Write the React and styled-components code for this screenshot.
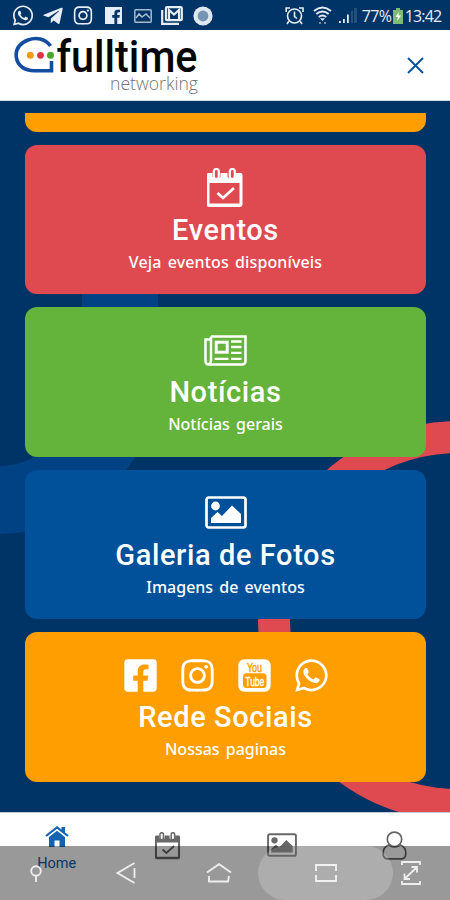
import React from 'react';
import styled, { createGlobalStyle } from 'styled-components';
import { FaWhatsapp, FaInstagram, FaFacebookSquare, FaTelegramPlane } from 'react-icons/fa';

const Global = createGlobalStyle`
  * { box-sizing: border-box; }
  body { margin: 0; background: #003366; }
`;

const Phone = styled.div`
  position: relative;
  display: flex;
  flex-direction: column;
  width: 450px;
  height: 900px;
  overflow: hidden;
  background: #003366;
  font-family: Roboto, 'Liberation Sans', sans-serif;
`;

const StatusBar = styled.div`
  display: flex;
  align-items: center;
  justify-content: space-between;
  flex: none;
  height: 30px;
  padding: 1px 9px 0 12px;
  background: #003366;
  color: #e6edf4;
`;

const StatusGroup = styled.div`
  display: flex;
  align-items: center;
`;

const Slot = styled.span`
  display: flex;
  justify-content: center;
  width: ${(p) => p.$w}px;
  margin-left: ${(p) => p.$ml || 0}px;
`;

const StatusText = styled.span`
  font-family: 'Open Sans', sans-serif;
  font-size: 16px;
  font-weight: 500;
  letter-spacing: ${(p) => p.$ls || 0}px;
`;

const Header = styled.header`
  display: flex;
  flex: none;
  align-items: flex-start;
  justify-content: space-between;
  height: 71px;
  padding: 0 26px 0 14px;
  background: #fff;
  border-bottom: 1px solid #d4dde6;
`;

const CloseButton = styled.button`
  display: flex;
  margin: 27px 0 0;
  padding: 0;
  border: 0;
  background: none;
`;

const Content = styled.main`
  position: relative;
  flex: none;
  height: 711px;
  padding: 12px 24px 0 25px;
  overflow: hidden;
`;

const Backdrop = styled.svg`
  position: absolute;
  left: 0;
  top: 0;
`;

const CardList = styled.div`
  position: relative;
  display: flex;
  flex-direction: column;
  gap: 12.6px;
`;

const CardEdge = styled.div`
  height: 19px;
  background: #ff9e00;
  border-radius: 0 0 12px 12px;
`;

const Card = styled.section`
  display: flex;
  flex-direction: column;
  align-items: center;
  height: 149.9px;
  padding-top: 22px;
  border-radius: 12px;
  background: ${(p) => p.$bg};
  color: #fff;
`;

const CardIcons = styled.div`
  display: flex;
  align-items: center;
  justify-content: center;
  gap: 20px;
  height: 42px;
`;

const CardTitle = styled.h2`
  margin: 4px 0 0;
  font-size: 29px;
  line-height: 34px;
  font-weight: 500;
  letter-spacing: 0.6px;
  white-space: nowrap;
`;

const CardText = styled.p`
  margin: 4px 0 0;
  font-family: 'Noto Sans', sans-serif;
  font-size: 16px;
  font-weight: 500;
  line-height: 22px;
  letter-spacing: ${(p) => p.$ls || 0}px;
  word-spacing: 2px;
  white-space: nowrap;
`;

const TabBar = styled.nav`
  display: grid;
  grid-template-columns: repeat(4, 112.5px);
  flex: none;
  height: 88px;
  background: #fff;
  border-top: 1px solid #c5ccd8;
`;

const Tab = styled.div`
  display: flex;
  flex-direction: column;
  align-items: center;
  padding-top: ${(p) => p.$top}px;
  padding-left: ${(p) => p.$shift || 0}px;
  color: ${(p) => p.$color || '#686868'};
  font-size: 15px;
  line-height: 18px;
`;

const TabLabel = styled.span`
  margin-top: 8px;
  font-size: 14.5px;
`;

const SystemNav = styled.div`
  position: absolute;
  left: 0;
  right: 0;
  bottom: 0;
  display: flex;
  align-items: center;
  height: 54px;
  background: rgba(0, 0, 0, 0.4);
  overflow: hidden;
`;

const NavKey = styled.span`
  display: flex;
  align-items: center;
  justify-content: center;
  flex: none;
  width: ${(p) => p.$w}px;
  height: 54px;
  border-radius: ${(p) => (p.$pressed ? '34px' : 0)};
  background: ${(p) => (p.$pressed ? 'rgba(255,255,255,0.2)' : 'none')};
`;

const CalendarIcon = ({ w = 38, h = 40 }) => (
  <svg width={w} height={h} viewBox="1.5 0 38 40" fill="none">
    <path d="M3 5H7V9Q11 14 15 9V5H22V9Q26 14 30 9V5H35Q37 5 37 7V36Q37 39 34 39H4Q1 39 1 36V7Q1 5 3 5Z M4 15V35.5H34V15Z" fill="currentColor" fillRule="evenodd" />
    <rect x="8.3" y="1" width="5" height="10" rx="2.5" stroke="currentColor" strokeWidth="2.2" />
    <rect x="24.3" y="1" width="5" height="10" rx="2.5" stroke="currentColor" strokeWidth="2.2" />
    <path d="M12 25L17.5 30L28.5 20" stroke="currentColor" strokeWidth="2.7" />
  </svg>
);

const NewsIcon = () => (
  <svg width="43" height="31" viewBox="0 0 43 31" fill="none" stroke="currentColor">
    <path d="M7 1.5H41.5V26Q41.5 29.5 38 29.5H5Q1.5 29.5 1.5 26V4.5H6M7 1.5V25Q7 29 4.5 29" strokeWidth="2.5" />
    <rect x="12.2" y="7.2" width="11" height="10" strokeWidth="3" />
    <path d="M27 6.5H37.5M27 12H37.5M27 17.8H37.5M10.5 23.8H24.5M27 23.8H37.5" strokeWidth="2.3" />
  </svg>
);

const ImageIcon = ({ w = 42, h = 33 }) => (
  <svg width={w} height={h} viewBox="0 0 42 33" fill="none">
    <rect x="1.5" y="1.5" width="39" height="30" rx="2.2" stroke="currentColor" strokeWidth="2.7" />
    <circle cx="10.5" cy="10" r="4.4" fill="currentColor" />
    <path d="M6 27V22L12.5 16L17 20L27 9.5L36 18V27Z" fill="currentColor" />
  </svg>
);

const YoutubeIcon = () => (
  <svg width="37" height="33" viewBox="-2 0 37 33" fontFamily="'Liberation Sans', sans-serif" textAnchor="middle">
    <rect x="0.3" y="0.3" width="32.4" height="32.4" rx="6" fill="#fff" />
    <text x="16.5" y="12.8" fontSize="13.5" fill="#ff9e00" stroke="#ff9e00" strokeWidth="0.5" textLength="15" lengthAdjust="spacingAndGlyphs">You</text>
    <rect x="5" y="14.3" width="23.5" height="14.8" rx="3.5" fill="#ff9e00" />
    <text x="16.8" y="26.8" fontSize="13" fill="#fff" stroke="#fff" strokeWidth="0.4" textLength="19" lengthAdjust="spacingAndGlyphs">Tube</text>
  </svg>
);

const Logo = () => (
  <svg width="190" height="70" viewBox="14 30 190 70" fill="none">
    <path d="M50.5 46C45 38.5 36 37 28 40C19 43.5 15.5 50 16.3 57C17.5 66 25 70.7 34 70.7H51.5V61" stroke="#124da0" strokeWidth="3.6" />
    <circle cx="30.3" cy="55.3" r="3.5" fill="#f59b14" />
    <circle cx="40.5" cy="55.3" r="3.4" fill="#df3345" />
    <circle cx="50.5" cy="55.3" r="3.5" fill="#4da62f" />
    <text x="56.5" y="72.3" fontFamily="Roboto, sans-serif" fontSize="45" fontWeight="500" fill="#050505" textLength="141" lengthAdjust="spacingAndGlyphs">fulltime</text>
    <text x="110" y="90" fontFamily="'Open Sans', sans-serif" fontSize="18" fontWeight="300" fill="#737373" textLength="88" lengthAdjust="spacingAndGlyphs">networking</text>
  </svg>
);

const AlarmIcon = () => (
  <svg width="19" height="20" viewBox="0 0 19 20" fill="none" stroke="currentColor" strokeWidth="1.6">
    <circle cx="9.5" cy="10" r="7" />
    <path d="M9.5 5.5V10.5L12 12.5M1.2 6V2H5M18 6V2H14M3.8 15.3L2 18M15.2 15.3L17 18" />
  </svg>
);

const WifiIcon = () => (
  <svg width="19" height="19" viewBox="0 0 19 19" fill="none" stroke="currentColor" strokeWidth="1.9">
    <path d="M1 5Q9.5-1.8 18 5M3.3 8Q9.5 3 15.7 8M5.8 11Q9.5 8 13.2 11" />
    <path d="M7 12.3H12L9.5 15Z" fill="currentColor" stroke="none" />
    <path d="M6 17H8M11 17H13" stroke="#7891aa" />
  </svg>
);

const SignalIcon = () => (
  <svg width="18" height="15" viewBox="0 0 18 15">
    <path d="M0 13H1.8V15H0ZM4 11H5.8V15H4ZM8 6.5H9.8V15H8Z" fill="#e6edf4" />
    <path d="M12 3H14V15H12ZM15 0H18V15H15Z" fill="#24507a" />
  </svg>
);

const App = () => (
  <>
    <Global />
    <Phone>
      <StatusBar>
        <StatusGroup>
          <Slot $w={22}><FaWhatsapp size={23} /></Slot>
          <Slot $w={22} $ml={8}><FaTelegramPlane size={22} /></Slot>
          <Slot $w={20} $ml={9}><FaInstagram size={21} /></Slot>
          <Slot $w={18} $ml={11}>
            <svg width="17" height="17" viewBox="0 0 17 17"><path d="M0 0H17V17H12.2V10.8H14.4L14.8 8H12.2V6.4Q12.2 5.2 13.5 5.2H15V2.7H12.8Q9.4 2.7 9.4 6V8H7.2V10.8H9.4V17H0Z" fill="currentColor" /></svg>
          </Slot>
          <Slot $w={18} $ml={12}>
            <svg width="18" height="14" viewBox="0 0 18 14" fill="none" stroke="#a9bccd" strokeWidth="1.5"><rect x="0.8" y="0.8" width="16.4" height="12.4" rx="1" /><path d="M2 9L5 5L8 8L12 5L16 9" /></svg>
          </Slot>
          <Slot $w={22} $ml={9}>
            <svg width="22" height="19" viewBox="0 0 22 19" fill="none" stroke="currentColor" strokeWidth="2.2"><rect x="5" y="1.2" width="15.8" height="13" rx="1" /><path d="M1.2 4V17.8H18M8 13V4L13 8.5L18 4V13" /></svg>
          </Slot>
          <Slot $w={20} $ml={10}>
            <svg width="20" height="20" viewBox="0 0 20 20"><circle cx="10" cy="10" r="9.6" fill="#dfe8f0" /><circle cx="10" cy="10" r="5.4" fill="#7595b4" /></svg>
          </Slot>
        </StatusGroup>
        <StatusGroup>
          <AlarmIcon />
          <Slot $w={19} $ml={9}><WifiIcon /></Slot>
          <Slot $w={18} $ml={7}><SignalIcon /></Slot>
          <Slot $w={31} $ml={4}><StatusText $ls={-0.6}>77%</StatusText></Slot>
          <Slot $w={10} $ml={1}>
            <svg width="10" height="16" viewBox="0 0 10 16"><path d="M3 0H7V2H10V16H0V2H3Z" fill="#80b879" /><path d="M6 4L2.5 9H5L4 13L8 7.5H5.3Z" fill="#fff" /></svg>
          </Slot>
          <Slot $w={36} $ml={2}><StatusText $ls={-0.9}>13:42</StatusText></Slot>
        </StatusGroup>
      </StatusBar>

      <Header>
        <Logo />
        <CloseButton aria-label="Fechar">
          <svg width="17" height="17" viewBox="0 0 17 17" stroke="#07539b" strokeWidth="1.9"><path d="M1 1L16 16M16 1L1 16" /></svg>
        </CloseButton>
      </Header>

      <Content>
        <Backdrop width="450" height="711" viewBox="0 101 450 711" fill="none">
          <path d="M82 215H158V375A159 159 0 0 1 -1 534V466A83 91 0 0 0 82 375Z" fill="#004284" />
          <circle cx="458" cy="621" r="184" stroke="#df4a50" strokeWidth="32" />
        </Backdrop>
        <CardList>
          <CardEdge />
          <Card $bg="#df4a50">
            <CardIcons><CalendarIcon /></CardIcons>
            <CardTitle>Eventos</CardTitle>
            <CardText $ls={0.12}>Veja eventos disponíveis</CardText>
          </Card>
          <Card $bg="#64b33a">
            <CardIcons><NewsIcon /></CardIcons>
            <CardTitle>Notícias</CardTitle>
            <CardText>Notícias gerais</CardText>
          </Card>
          <Card $bg="#00509a">
            <CardIcons><ImageIcon /></CardIcons>
            <CardTitle>Galeria de Fotos</CardTitle>
            <CardText>Imagens de eventos</CardText>
          </Card>
          <Card $bg="#ff9e00">
            <CardIcons>
              <FaFacebookSquare size={37} />
              <FaInstagram size={37} />
              <YoutubeIcon />
              <FaWhatsapp size={37} />
            </CardIcons>
            <CardTitle>Rede Sociais</CardTitle>
            <CardText>Nossas paginas</CardText>
          </Card>
        </CardList>
      </Content>

      <TabBar>
        <Tab $top={13} $shift={1} $color="#0f5aa8">
          <svg width="24" height="21" viewBox="0 0 24 21"><path d="M1 10L12 1.5L23 10" fill="none" stroke="#1463b0" strokeWidth="2.2" /><path d="M4 11L12 4.8L20 11V21H14.5V14.5H9.5V21H4ZM16.5 1H20V7L16.5 4.5Z" fill="#1463b0" /></svg>
          <TabLabel>Home</TabLabel>
        </Tab>
        <Tab $top={19}><CalendarIcon w={27} h={28} /></Tab>
        <Tab $top={20} $shift={2}><ImageIcon w={30} h={24} /></Tab>
        <Tab $top={18} $shift={1}>
          <svg width="25" height="29" viewBox="0 0 25 29" fill="none" stroke="#626262" strokeWidth="1.7"><path d="M6.5 14Q1.2 16 1.2 22.5Q1.2 27.8 5.5 27.8H19.5Q23.8 27.8 23.8 22.5Q23.8 16 18.5 14Q12.5 18 6.5 14Z" /><circle cx="12.5" cy="8.3" r="7.2" /></svg>
        </Tab>
      </TabBar>

      <SystemNav>
        <NavKey $w={71}>
          <svg width="12" height="17" viewBox="0 0 12 17" fill="none" stroke="#eee" strokeWidth="1.9"><circle cx="6" cy="6" r="4.8" /><path d="M6 11V17" /></svg>
        </NavKey>
        <NavKey $w={109}>
          <svg width="20" height="22" viewBox="0 0 20 22" fill="none" stroke="#eee" strokeWidth="1.8"><path d="M18.5 1L1.5 11L18.5 21M18.5 6V16" /></svg>
        </NavKey>
        <NavKey $w={78}>
          <svg width="26" height="20" viewBox="0 0 26 20" fill="none" stroke="#eee" strokeWidth="1.8"><path d="M1 9.5L13 1.2L25 9.5M3 13V18.5H22L23 13" /></svg>
        </NavKey>
        <NavKey $w={135} $pressed>
          <svg width="22" height="18" viewBox="0 0 22 18" fill="none" stroke="#f2f2f2" strokeWidth="1.8"><path d="M1 7V1H21V7M1 11V17H21V11" /></svg>
        </NavKey>
        <NavKey $w={36}>
          <svg width="20" height="24" viewBox="0 0 20 24" fill="none" stroke="#eee" strokeWidth="1.8"><path d="M1 4V1H19V4M1 20V23H19V20M3.5 18L16 6M10.5 6H16V11.5M3.5 12.5V18H9" /></svg>
        </NavKey>
      </SystemNav>
    </Phone>
  </>
);

export default App;
